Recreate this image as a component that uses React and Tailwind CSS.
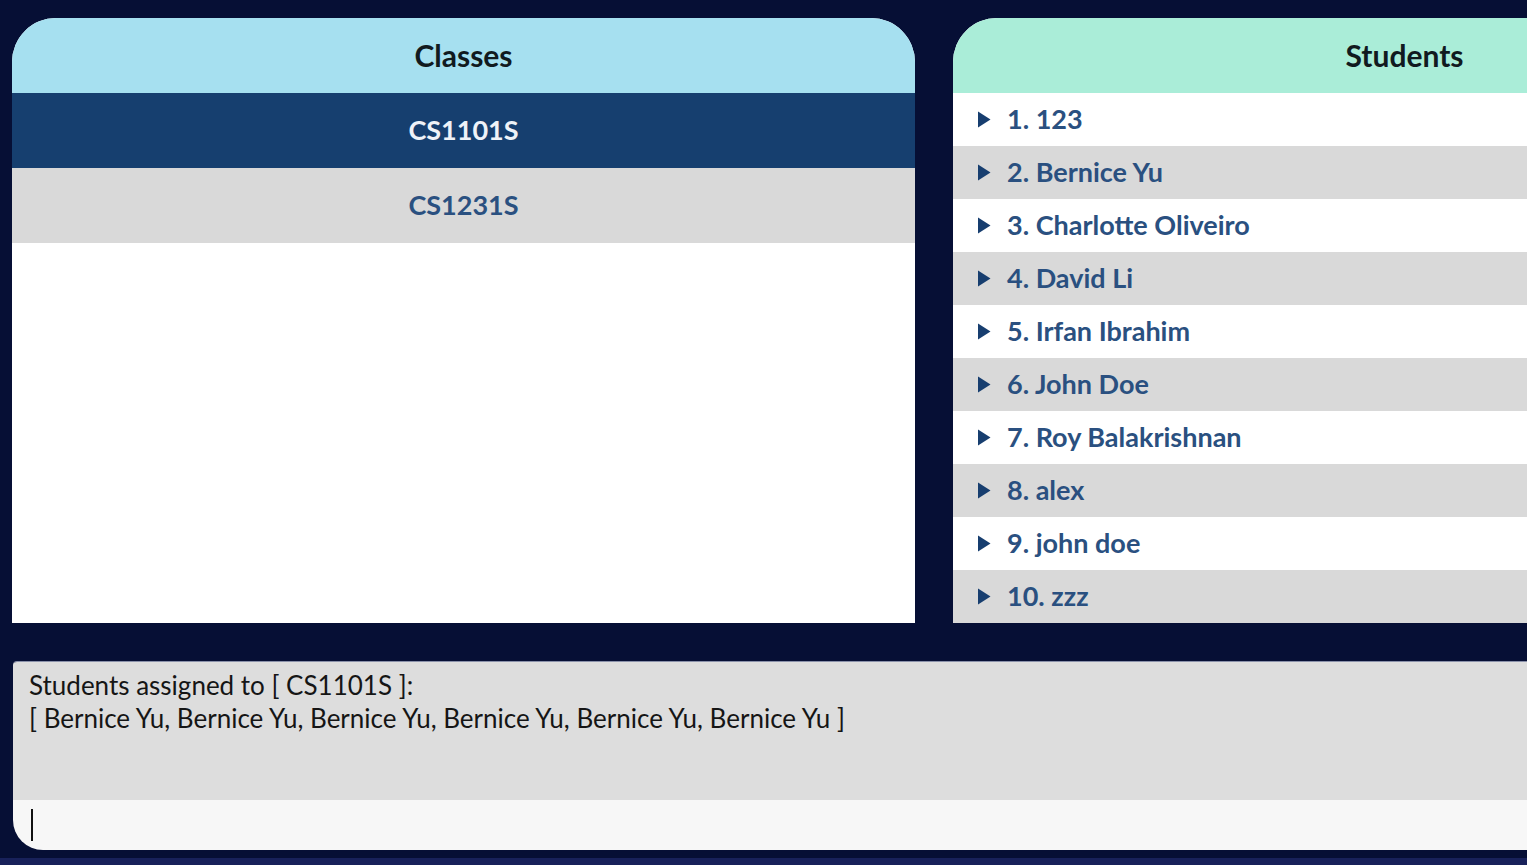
import React from 'react'

const classes = ['CS1101S', 'CS1231S']

const students = [
    '123',
    'Bernice Yu',
    'Charlotte Oliveiro',
    'David Li',
    'Irfan Ibrahim',
    'John Doe',
    'Roy Balakrishnan',
    'alex',
    'john doe',
    'zzz',
]

const Arrow = () => (
    <svg width="14" height="17" viewBox="0 0 14 17" className="shrink-0">
        <path d="M1 0.5 L13.5 8.5 L1 16.5 Z" fill="#173e6f" />
    </svg>
)

const App = () => {
    const selected = 'CS1101S'
    const assigned = Array(6).fill('Bernice Yu').join(', ')

    return (
        <div
            className="w-full h-[865px] overflow-hidden bg-[#060f35] flex flex-col"
            style={{ fontFamily: 'Lato, "Liberation Sans", sans-serif' }}
        >
            <div className="flex flex-col w-[1860px] pl-[12px] pt-[18px]">
                <div className="flex gap-[38px] h-[605px]">
                    {/* classes panel */}
                    <div className="w-[903px] flex flex-col bg-white rounded-tl-[44px] rounded-tr-[44px] overflow-hidden">
                        <div className="h-[75px] shrink-0 bg-[#a6e0f0] flex items-center justify-center text-[30px] font-bold text-[#111a1f]">
                            Classes
                        </div>
                        {classes.map(c => (
                            <div
                                key={c}
                                className={
                                    c === selected
                                        ? 'h-[75px] flex items-center justify-center bg-[#163f6f] text-[#eef2f8] text-[27px] font-bold'
                                        : 'h-[75px] flex items-center justify-center bg-[#d9d9d9] text-[#2a5080] text-[27px] font-bold'
                                }
                            >
                                {c}
                            </div>
                        ))}
                    </div>

                    {/* students panel */}
                    <div className="w-[903px] flex flex-col bg-white rounded-tl-[44px] rounded-tr-[44px] overflow-hidden">
                        <div className="h-[75px] shrink-0 bg-[#aaedd8] flex items-center justify-center text-[30px] font-bold text-[#111a1f]">
                            Students
                        </div>
                        {students.map((s, i) => (
                            <div
                                key={i}
                                className={
                                    (i % 2 === 0 ? 'bg-white' : 'bg-[#d9d9d9]') +
                                    ' h-[53px] flex items-center pl-[24px] gap-[16px] text-[27px] font-bold text-[#2a5080]'
                                }
                            >
                                <Arrow />
                                <span>{i + 1}. {s}</span>
                            </div>
                        ))}
                    </div>
                </div>

                {/* result + command box */}
                <div className="mt-[38px] ml-[1px] h-[189px] flex flex-col rounded-tl-[4px] rounded-bl-[30px] overflow-hidden border-t border-[#8a91aa]">
                    <div className="h-[138px] bg-[#dddddd] pl-[16px] pt-[7px] text-[26px] leading-[33px] text-[#151515]">
                        <div>Students assigned to [ {selected} ]:</div>
                        <div>[ {assigned} ]</div>
                    </div>
                    <div className="flex-1 bg-[#f7f7f7] flex items-center pl-[18px]">
                        <div className="w-[2px] h-[32px] bg-[#111]" />
                    </div>
                </div>
            </div>
            <div className="flex-1" />
            <div className="h-[7px] bg-[#18215a]" />
        </div>
    )
}

export default App
